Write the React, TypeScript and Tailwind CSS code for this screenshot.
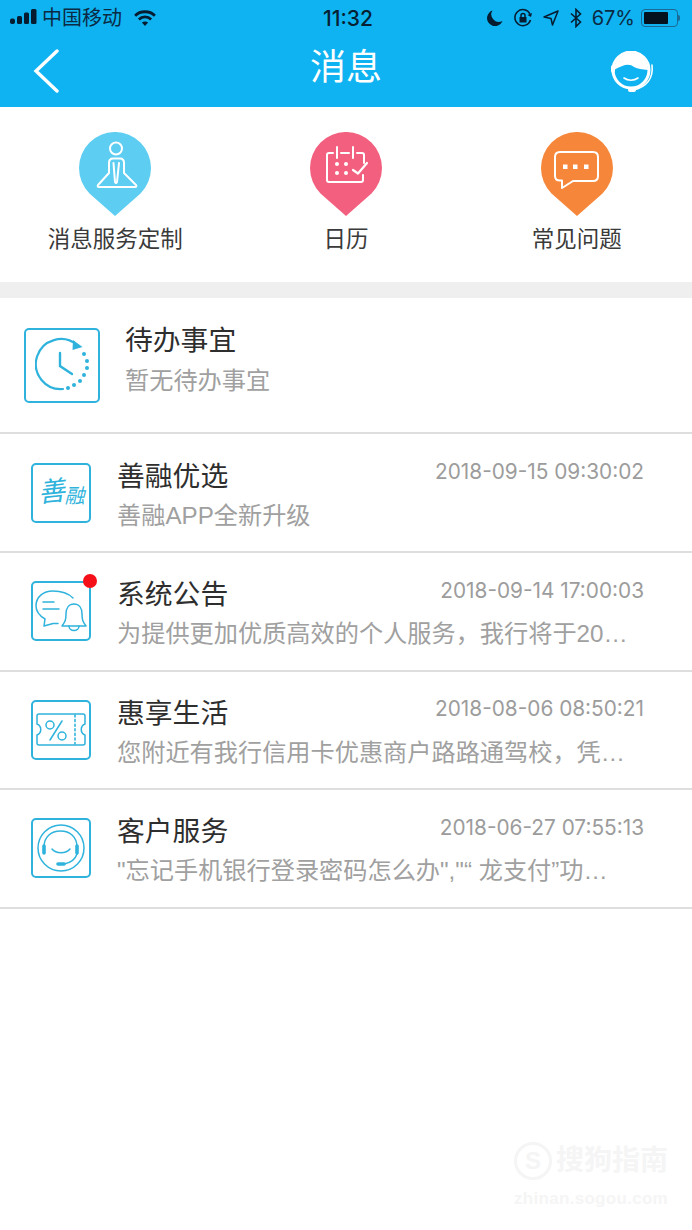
import React from 'react';

const CJK = '"Liberation Sans", "Noto Sans CJK SC", sans-serif';
const BLUE = '#2fb3dc';

const PinIcon: React.FC<{ color: string; children: React.ReactNode }> = ({ color, children }) => (
    <svg width="72" height="84" viewBox="0 0 72 84" fill="none">
        <path d="M36 84 L10.5 61.4 A36 36 0 1 1 61.5 61.4 Z" fill={color} />
        {children}
    </svg>
);

const ServiceIcon = () => (
    <g stroke="#fff" strokeWidth="2" strokeLinejoin="round" strokeLinecap="round">
        <circle cx="37" cy="16.5" r="6" />
        <path d="M30 41 V31 Q30 26.5 34 26.5 H41 Q45 26.5 45 31 V41 L57 53 Q58 55 56 55 H20 Q18 55 19 53 Z" />
        <path d="M34.5 31 L36 50 Q37 52 38 50 L40 31" />
    </g>
);

const CalendarIcon = () => (
    <g stroke="#fff" strokeWidth="2" strokeLinecap="round" strokeLinejoin="round">
        <path d="M54 31 V23 Q54 21 52 21 H47 M39 21 H31 M23 21 H19 Q17 21 17 23 V48 Q17 50 19 50 H51 Q53 50 53 48 V43" />
        <path d="M27 15 V26 M43 15 V26" />
        <path d="M43 38 L48 41.5 L57 31" strokeWidth="2.2" />
        <g fill="#fff" stroke="none">
            <circle cx="27" cy="32" r="2" /><circle cx="36" cy="32" r="2" />
            <circle cx="27" cy="41" r="2" /><circle cx="36" cy="41" r="2" />
        </g>
    </g>
);

const ChatIcon = () => (
    <g>
        <path
            d="M19 20 H52 Q57 20 57 25 V44 Q57 49 52 49 H32 L21 56 V48.5 H19 Q14 48.5 14 44 V25 Q14 20 19 20 Z"
            stroke="#fff"
            strokeWidth="2"
            strokeLinejoin="round"
        />
        <g fill="#fff">
            <rect x="22" y="32.5" width="4.5" height="4.5" />
            <rect x="32" y="32.5" width="4.5" height="4.5" />
            <rect x="43" y="32.5" width="4.5" height="4.5" />
        </g>
    </g>
);

const ClockIcon = () => (
    <svg className="ml-[2px]" width="56" height="58" viewBox="0 0 56 58" fill="none" stroke={BLUE} strokeWidth="2.2" strokeLinecap="round">
        <path d="M28 53 A25 25 0 1 1 42 9" />
        <path d="M38 4 L47.5 11 L37.5 14 Z" fill={BLUE} stroke="none" />
        <path d="M25 17 V30 L37 38" strokeWidth="2.4" />
        <g fill={BLUE} stroke="none">
            <circle cx="49" cy="18" r="2" /><circle cx="52" cy="25" r="2" /><circle cx="52" cy="32" r="2" />
            <circle cx="49" cy="39" r="2" /><circle cx="45" cy="45" r="2" /><circle cx="39" cy="49" r="2" />
            <circle cx="33" cy="52" r="2" />
        </g>
    </svg>
);

const BellChatIcon = () => (
    <svg width="52" height="42" viewBox="0 0 52 42" fill="none" stroke={BLUE} strokeWidth="1.5" strokeLinecap="round" strokeLinejoin="round">
        <path d="M38 8 C33 3 26 1 18 1 C8 1 1 7 1 16 C1 22 5 26 10 29 L9 36 L18 33.5 H23" />
        <path d="M8 12 H19 M8 19 H24" />
        <path d="M27 36 H51 C48 32 47 30 47 24 C47 18 44 14 39 14 C34 14 31 18 31 24 C31 30 30 32 27 36 Z" />
        <path d="M34 36 C34 42 44 42 44 36" />
    </svg>
);

const CouponIcon = () => (
    <svg width="50" height="33" viewBox="0 0 50 33" fill="none" stroke={BLUE} strokeWidth="1.5" strokeLinecap="round" strokeLinejoin="round">
        <path d="M3 1 H47 Q49 1 49 3 V11 C44 13 44 20 49 22 V30 Q49 32 47 32 H3 Q1 32 1 30 V22 C6 20 6 13 1 11 V3 Q1 1 3 1 Z" />
        <path d="M39 2 V31" strokeDasharray="2 2.6" strokeWidth="1.6" />
        <circle cx="14" cy="12" r="4" />
        <circle cx="26" cy="23" r="4" />
        <path d="M26 8 L14 27" />
    </svg>
);

const HeadsetIcon = () => (
    <svg width="48" height="48" viewBox="0 0 48 48" fill="none" stroke={BLUE} strokeWidth="1.5" strokeLinecap="round">
        <circle cx="24" cy="24" r="23" />
        <path d="M7 23 C7 13 14 7 23.5 7 C33 7 40 13 40 23" />
        <path d="M15 25 C19 30 29 30 33 25" />
        <path d="M40 30 C38 36 33 39 27 40" />
        <path d="M7 22 V29" strokeWidth="3.6" />
        <path d="M40 22 V29" strokeWidth="3.6" />
        <path d="M21 40 H27" strokeWidth="3.6" />
    </svg>
);

const CalligraphyLogo = () => (
    <div className="flex items-end text-[#2fb3dc]">
        <span className="-rotate-6 text-[27px] italic leading-none">善</span>
        <span className="text-[20px] italic leading-none">融</span>
    </div>
);

const StatusBar = () => (
    <div className="flex h-[36px] items-center justify-between pl-[10px] pr-[12px] text-[#0b2a44]">
        <div className="flex flex-1 items-center">
            <svg className="mt-[-3px]" width="27" height="15" viewBox="0 0 27 15" fill="#061c30">
                <rect x="0" y="9.5" width="5" height="5.5" rx="2" />
                <rect x="7" y="7" width="5" height="8" rx="1.5" />
                <rect x="14" y="3.5" width="5" height="11.5" rx="1.5" />
                <rect x="21" y="0" width="5.5" height="15" rx="1.5" />
            </svg>
            <span className="ml-[5px] text-[20px] leading-none">中国移动</span>
            <svg className="ml-[11px]" width="24" height="16" viewBox="0 0 24 17" fill="none" stroke="#061c30" strokeWidth="3">
                <path d="M1.5 6 C7 0.5 17 0.5 22.5 6" />
                <path d="M5.5 10 C9 6.5 15 6.5 18.5 10" />
                <path d="M12 17 L8.7 13.3 C10.5 11.8 13.5 11.8 15.3 13.3 Z" fill="#061c30" stroke="none" />
            </svg>
        </div>
        <span className="ml-[6px] font-['Inter'] text-[21px] font-medium leading-none text-[#071f33]">11:32</span>
        <div className="flex flex-1 items-center justify-end">
            <svg width="16" height="16" viewBox="0 0 16 16" fill="#061c30">
                <path d="M5.5 0.5 A8 8 0 1 0 15.5 11 A7.5 7.5 0 0 1 5.5 0.5 Z" />
            </svg>
            <svg className="ml-[10px]" width="20" height="20" viewBox="0 0 20 20" fill="none" stroke="#061c30" strokeWidth="1.5">
                <path d="M17.5 12 A8 8 0 1 1 17 6" />
                <path d="M19 5 L18 9 L14.5 7 Z" fill="#061c30" stroke="none" />
                <rect x="6.5" y="9" width="7" height="5.5" fill="#061c30" stroke="none" />
                <path d="M8 9 V7.5 A2 2 0 0 1 12 7.5 V9" />
            </svg>
            <svg className="ml-[10px]" width="16" height="16" viewBox="0 0 16 16" fill="none" stroke="#061c30" strokeWidth="1.5" strokeLinejoin="round">
                <path d="M15 1 L1 7 L8 8.5 L9.5 15 Z" />
            </svg>
            <svg className="ml-[11px]" width="12" height="20" viewBox="0 0 12 20" fill="none" stroke="#061c30" strokeWidth="1.6">
                <path d="M1 5.5 L10.5 14 L6 18.5 V1.5 L10.5 6 L1 14.5" />
            </svg>
            <span className="ml-[10px] font-['Inter'] text-[20px] leading-none">67%</span>
            <div className="ml-[6px] flex items-center">
                <div className="flex h-[18px] w-[37px] items-center rounded-[4px] border border-[#1a6a95] p-[2px]">
                    <div className="h-full w-[24px] rounded-[1px] bg-[#04121f]" />
                </div>
                <div className="h-[6px] w-[2px] rounded-r-sm bg-[#1a6a95]" />
            </div>
        </div>
    </div>
);

const NavBar = () => (
    <div className="flex h-[71px] items-center px-[33px]">
        <div className="flex-1">
            <svg className="mt-[-2px]" width="27" height="44" viewBox="0 0 27 44" fill="none" stroke="#fff" strokeWidth="3.4" strokeLinecap="round">
                <path d="M24 2 L3 22 L24 42" />
            </svg>
        </div>
        <span className="mt-[-7px] text-[36px] leading-none text-white">消息</span>
        <div className="flex flex-1 justify-end">
            <svg className="mr-[5px]" width="43" height="42" viewBox="0 0 43 42" fill="none" stroke="#fff" strokeLinecap="round">
                <circle cx="20" cy="19" r="18" strokeWidth="3" />
                <path d="M3 19 C12 14 18 12 23 16 C27 18 31 18 37 19 A17 17 0 0 0 3 19 Z" fill="#fff" stroke="none" />
                <path d="M13 27 C17 30 23 30 27 27" strokeWidth="1.6" />
                <path d="M41 14 C42.5 27 36 36 22 39" strokeWidth="1.6" />
                <path d="M19 39 H23" strokeWidth="4" />
                <path d="M2 16 V20" strokeWidth="4" />
            </svg>
        </div>
    </div>
);

const Shortcut: React.FC<{ label: string; color: string; children: React.ReactNode }> = ({ label, color, children }) => (
    <div className="flex flex-col items-center">
        <PinIcon color={color}>{children}</PinIcon>
        <span className="mt-[9px] text-[22.5px] leading-[30px] text-[#3a3a3a]">{label}</span>
    </div>
);

const MessageRow: React.FC<{
    title: string;
    time: string;
    sub: React.ReactNode;
    badge?: boolean;
    children: React.ReactNode;
}> = ({ title, time, sub, badge, children }) => (
    <div className="flex h-[118.6px] items-center border-b-2 border-[#dedede] pl-[31px] pr-[48px]">
        <div className="relative flex h-[60px] w-[60px] shrink-0 items-center justify-center rounded-[5px] border-2 border-[#2fb3dc]">
            {children}
            {badge && <div className="absolute right-[-8px] top-[-9px] h-[14px] w-[14px] rounded-full bg-[#f50f18]" />}
        </div>
        <div className="ml-[26px] min-w-0 flex-1 pt-[5px]">
            <div className="flex items-center justify-between">
                <span className="text-[27.8px] leading-[36px] text-[#2e2e2e]">{title}</span>
                <span className="mt-[-9px] font-['Inter'] text-[20.8px] leading-[26px] text-[#9c9c9c]">{time}</span>
            </div>
            <div className="mt-[5px] h-[32px] whitespace-nowrap text-[24.2px] leading-[32px] text-[#a0a0a0]">{sub}</div>
        </div>
    </div>
);

const App: React.FC = () => (
    <div className="relative h-[1230px] w-[692px] overflow-hidden bg-white" style={{ fontFamily: CJK }}>
        <header className="bg-[#0fb3f1]">
            <StatusBar />
            <NavBar />
        </header>

        <section className="grid h-[175px] grid-cols-3 pt-[25px]">
            <Shortcut label="消息服务定制" color="#5dcdf2"><ServiceIcon /></Shortcut>
            <Shortcut label="日历" color="#f3607f"><CalendarIcon /></Shortcut>
            <Shortcut label="常见问题" color="#f6873a"><ChatIcon /></Shortcut>
        </section>

        <div className="h-[16px] bg-[#efefef]" />

        <div className="flex h-[136.4px] items-center border-b-2 border-[#dedede] pl-[24px]">
            <div className="flex h-[75px] w-[76px] shrink-0 items-center justify-center rounded-[5px] border-2 border-[#2fb3dc]">
                <ClockIcon />
            </div>
            <div className="ml-[25px] pb-[10px]">
                <div className="text-[27.8px] leading-[36px] text-[#2e2e2e]">待办事宜</div>
                <div className="mt-[6px] text-[24.2px] leading-[32px] text-[#a0a0a0]">暂无待办事宜</div>
            </div>
        </div>

        <MessageRow title="善融优选" time="2018-09-15 09:30:02" sub="善融APP全新升级">
            <CalligraphyLogo />
        </MessageRow>
        <MessageRow title="系统公告" time="2018-09-14 17:00:03" sub="为提供更加优质高效的个人服务，我行将于20…" badge>
            <BellChatIcon />
        </MessageRow>
        <MessageRow title="惠享生活" time="2018-08-06 08:50:21" sub="您附近有我行信用卡优惠商户路路通驾校，凭…">
            <CouponIcon />
        </MessageRow>
        <MessageRow
            title="客户服务"
            time="2018-06-27 07:55:13"
            sub={'"忘记手机银行登录密码怎么办","“ 龙支付”功…'}
        >
            <HeadsetIcon />
        </MessageRow>

        {/* watermark */}
        <div className="absolute left-[514px] top-[1142px] flex flex-col items-center text-[#f5f5f5]">
            <div className="flex items-center">
                <div className="flex h-[38px] w-[38px] items-center justify-center rounded-full border-[3px] border-[#f5f5f5] text-[24px] font-bold leading-none">S</div>
                <span className="ml-[4px] text-[28px] font-bold leading-none">搜狗指南</span>
            </div>
            <span className="mt-[10px] text-[17px] font-bold leading-none tracking-[0.3px]">zhinan.sogou.com</span>
        </div>
    </div>
);

export default App;
